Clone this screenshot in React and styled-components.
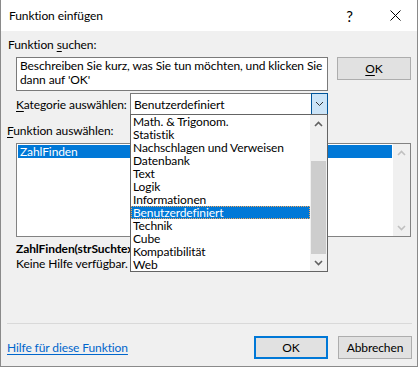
import React from 'react';
import styled, { createGlobalStyle } from 'styled-components';

const Global = createGlobalStyle`
  html, body { margin: 0; padding: 0; background: #ffffff; }
  body {
    font-family: Lato, "Liberation Sans", Arial, sans-serif;
    font-size: 12px;
    letter-spacing: -0.1px;
    color: #000;
  }
  #root { width: 419px; height: 369px; }
`;

const Dialog = styled.div`
  width: 418px;
  height: 367px;
  box-sizing: border-box;
  border: 1px solid #8a8a8a;
  border-top: none;
  display: flex;
  flex-direction: column;
  background: #f0f0f0;
`;

const TitleBar = styled.div`
  height: 31px;
  flex: none;
  background: #fff;
  display: flex;
  align-items: center;
  padding-left: 8px;
`;

const Title = styled.div`
  flex: 1;
  font-size: 12px;
`;

const TitleButton = styled.div`
  width: ${(p) => p.$w}px;
  height: 31px;
  display: flex;
  align-items: center;
  justify-content: center;
  font-size: 15px;
  color: #000;
`;

const Body = styled.div`
  flex: 1;
  display: flex;
  flex-direction: column;
  position: relative;
`;

const Label = styled.div`
  align-self: flex-start;
  line-height: 15px;
  margin-top: ${(p) => p.$mt || 0}px;
  margin-left: ${(p) => p.$pl || 0}px;
  white-space: nowrap;
`;

const U = styled.span`
  text-decoration: underline;
  text-underline-offset: 2px;
`;

const SearchRow = styled.div`
  display: flex;
  align-items: flex-start;
  margin-top: 5px;
  padding-left: 15px;
`;

const SearchBox = styled.div`
  width: 312px;
  height: 34px;
  box-sizing: border-box;
  border: 1px solid #7a7a7a;
  background: #fff;
  padding: 1px 1px 0 3px;
  line-height: 14px;
`;

const Button = styled.div`
  width: 74px;
  height: 23px;
  box-sizing: border-box;
  background: #e1e1e1;
  border: ${(p) => (p.$default ? '2px solid #0078d7' : '1px solid #adadad')};
  display: flex;
  align-items: center;
  justify-content: center;
  margin-left: ${(p) => p.$ml || 0}px;
  flex: none;
`;

const CategoryRow = styled.div`
  display: flex;
  align-items: center;
  margin-top: 2px;
  padding-left: 15px;
`;

const CategoryLabel = styled.div`
  width: 114px;
  flex: none;
`;

const Select = styled.div`
  position: relative;
  width: 198px;
  height: 22px;
  box-sizing: border-box;
  border: 1px solid #7a7a7a;
  border-right: none;
  background: #fff;
  display: flex;
  align-items: center;
`;

const SelectValue = styled.div`
  flex: 1;
  padding-left: 3px;
`;

const DropButton = styled.div`
  width: 17px;
  height: 22px;
  margin-top: -1px;
  margin-bottom: -1px;
  box-sizing: border-box;
  background: #cce4f7;
  border: 1px solid #005499;
  display: flex;
  align-items: center;
  justify-content: center;
`;

const DropList = styled.div`
  position: absolute;
  top: 20px;
  left: -1px;
  width: 198px;
  height: 158px;
  box-sizing: border-box;
  border: 1px solid #646464;
  background: #fff;
  display: flex;
  z-index: 5;
`;

const Items = styled.div`
  flex: 1;
  display: flex;
  flex-direction: column;
`;

const Item = styled.div`
  height: 13px;
  line-height: 13px;
  padding-left: 2px;
  box-sizing: border-box;
  white-space: nowrap;
  background: ${(p) => (p.$sel ? '#0078d7' : 'transparent')};
  color: ${(p) => (p.$sel ? '#fff' : '#000')};
  outline: ${(p) => (p.$sel ? '1px dotted #f3a65a' : 'none')};
  outline-offset: -1px;
`;

const ScrollBar = styled.div`
  width: 17px;
  flex: none;
  background: #f0f0f0;
  display: flex;
  flex-direction: column;
`;

const ScrollArrow = styled.div`
  height: 17px;
  flex: none;
  display: flex;
  align-items: center;
  justify-content: center;
`;

const ScrollTrack = styled.div`
  flex: 1;
  display: flex;
  flex-direction: column;
  padding: 0 1px;
`;

const Thumb = styled.div`
  background: #cdcdcd;
  height: ${(p) => p.$h}px;
  margin-top: ${(p) => p.$top}px;
`;

const ListBox = styled.div`
  margin: 5px 0 0 15px;
  width: 395px;
  height: 94px;
  box-sizing: border-box;
  border: 1px solid #828282;
  background: #fff;
  display: flex;
`;

const ListItems = styled.div`
  flex: 1;
  padding: 1px;
`;

const ListItem = styled.div`
  height: 13px;
  line-height: 13px;
  padding-left: 2px;
  background: ${(p) => (p.$sel ? '#0078d7' : 'transparent')};
  color: ${(p) => (p.$sel ? '#fff' : '#000')};
`;

const Signature = styled.div`
  align-self: flex-start;
  margin: 4px 0 0 15px;
  line-height: 15px;
  font-weight: bold;
  white-space: nowrap;
`;

const HelpText = styled.div`
  align-self: flex-start;
  margin-left: 15px;
  line-height: 15px;
`;

const Separator = styled.div`
  margin: auto 5px 0 6px;
  height: 1px;
  background: #d9d9d9;
`;

const Footer = styled.div`
  display: flex;
  align-items: center;
  margin-top: 12px;
  padding: 0 5px 7px 6px;
`;

const LinkSlot = styled.div`
  flex: 1;
`;

const Link = styled.a`
  color: #0066cc;
  text-decoration: underline;
  text-underline-offset: 2px;
  cursor: pointer;
`;

const Chevron = ({ up, color = '#606060', w = 1.6 }) => (
  <svg width="9" height="6" viewBox="0 0 9 6">
    <path
      d={up ? 'M1 5 L4.5 1.5 L8 5' : 'M1 1 L4.5 4.5 L8 1'}
      fill="none"
      stroke={color}
      strokeWidth={w}
    />
  </svg>
);

const categories = [
  'Math. & Trigonom.',
  'Statistik',
  'Nachschlagen und Verweisen',
  'Datenbank',
  'Text',
  'Logik',
  'Informationen',
  'Benutzerdefiniert',
  'Technik',
  'Cube',
  'Kompatibilität',
  'Web',
];

export default function App() {
  return (
    <>
      <Global />
      <Dialog>
        <TitleBar>
          <Title>Funktion einfügen</Title>
          <TitleButton $w={47}>?</TitleButton>
          <TitleButton $w={44}>
            <svg width="11" height="11" viewBox="0 0 11 11">
              <path d="M0.5 0.5 L10.5 10.5 M10.5 0.5 L0.5 10.5" stroke="#000" strokeWidth="1" fill="none" />
            </svg>
          </TitleButton>
        </TitleBar>
        <Body>
          <Label $mt={6} $pl={7}>
            Funktion <U>s</U>uchen:
          </Label>
          <SearchRow>
            <SearchBox>
              Beschreiben Sie kurz, was Sie tun möchten, und klicken Sie dann auf 'OK'
            </SearchBox>
            <Button $ml={9}>
              <span><U>O</U>K</span>
            </Button>
          </SearchRow>
          <CategoryRow>
            <CategoryLabel>
              <U>K</U>ategorie auswählen:
            </CategoryLabel>
            <Select>
              <SelectValue>Benutzerdefiniert</SelectValue>
              <DropButton>
                <Chevron color="#333" w={1} />
              </DropButton>
              <DropList>
                <Items>
                  {categories.map((c) => (
                    <Item key={c} $sel={c === 'Benutzerdefiniert'}>
                      {c}
                    </Item>
                  ))}
                </Items>
                <ScrollBar>
                  <ScrollArrow>
                    <Chevron up />
                  </ScrollArrow>
                  <ScrollTrack>
                    <Thumb $top={29} $h={93} />
                  </ScrollTrack>
                  <ScrollArrow>
                    <Chevron />
                  </ScrollArrow>
                </ScrollBar>
              </DropList>
            </Select>
          </CategoryRow>
          <Label $mt={8} $pl={6}>
            <U>F</U>unktion auswählen:
          </Label>
          <ListBox>
            <ListItems>
              <ListItem $sel>ZahlFinden</ListItem>
            </ListItems>
            <ScrollBar>
              <ScrollArrow>
                <Chevron up color="#c0c0c0" />
              </ScrollArrow>
              <ScrollTrack />
              <ScrollArrow>
                <Chevron color="#c0c0c0" />
              </ScrollArrow>
            </ScrollBar>
          </ListBox>
          <Signature>ZahlFinden(strSuchtext)</Signature>
          <HelpText>Keine Hilfe verfügbar.</HelpText>
          <Separator />
          <Footer>
            <LinkSlot>
              <Link>Hilfe für diese Funktion</Link>
            </LinkSlot>
            <Button $default>OK</Button>
            <Button $ml={10}>Abbrechen</Button>
          </Footer>
        </Body>
      </Dialog>
    </>
  );
}
